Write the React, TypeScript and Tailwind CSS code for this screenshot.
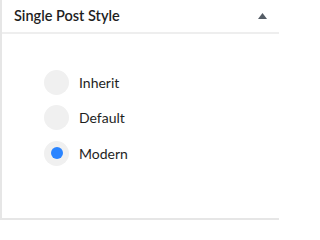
import React from "react";

const options = ["Inherit", "Default", "Modern"];

export default function App() {
  const selected = "Modern";
  return (
    <div className="w-[279px] h-[220px] bg-white overflow-hidden" style={{ fontFamily: 'Lato, "Open Sans", sans-serif' }}>
      <div className="w-[280px] h-[220px] border-l-2 border-r border-b-2 border-[#e6e6e6] flex flex-col">
        <div className="h-[34px] shrink-0 border-b-2 border-[#eeeeee] flex items-center justify-between pl-[12px] pr-[12px]">
          <span className="text-[14.5px] font-semibold text-[#1e1e1e]">Single Post Style</span>
          <svg width="9" height="6" viewBox="0 0 9 6" className="mb-[1px]">
            <polygon points="0,6 4.5,0 9,6" fill="#555d66" />
          </svg>
        </div>
        <div className="flex flex-col gap-[11.5px] pt-[36px] pl-[42px]">
          {options.map((o) => (
            <div key={o} className="flex items-center gap-[10px] h-[24px]">
              <span className="w-[25px] h-[25px] shrink-0 rounded-full bg-[#f0f0f0] flex items-center justify-center">
                {o === selected && <span className="w-[12px] h-[12px] rounded-full bg-[#2a84ff]" />}
              </span>
              <span className="text-[14px] text-[#1e1e1e]">{o}</span>
            </div>
          ))}
        </div>
      </div>
    </div>
  );
}
